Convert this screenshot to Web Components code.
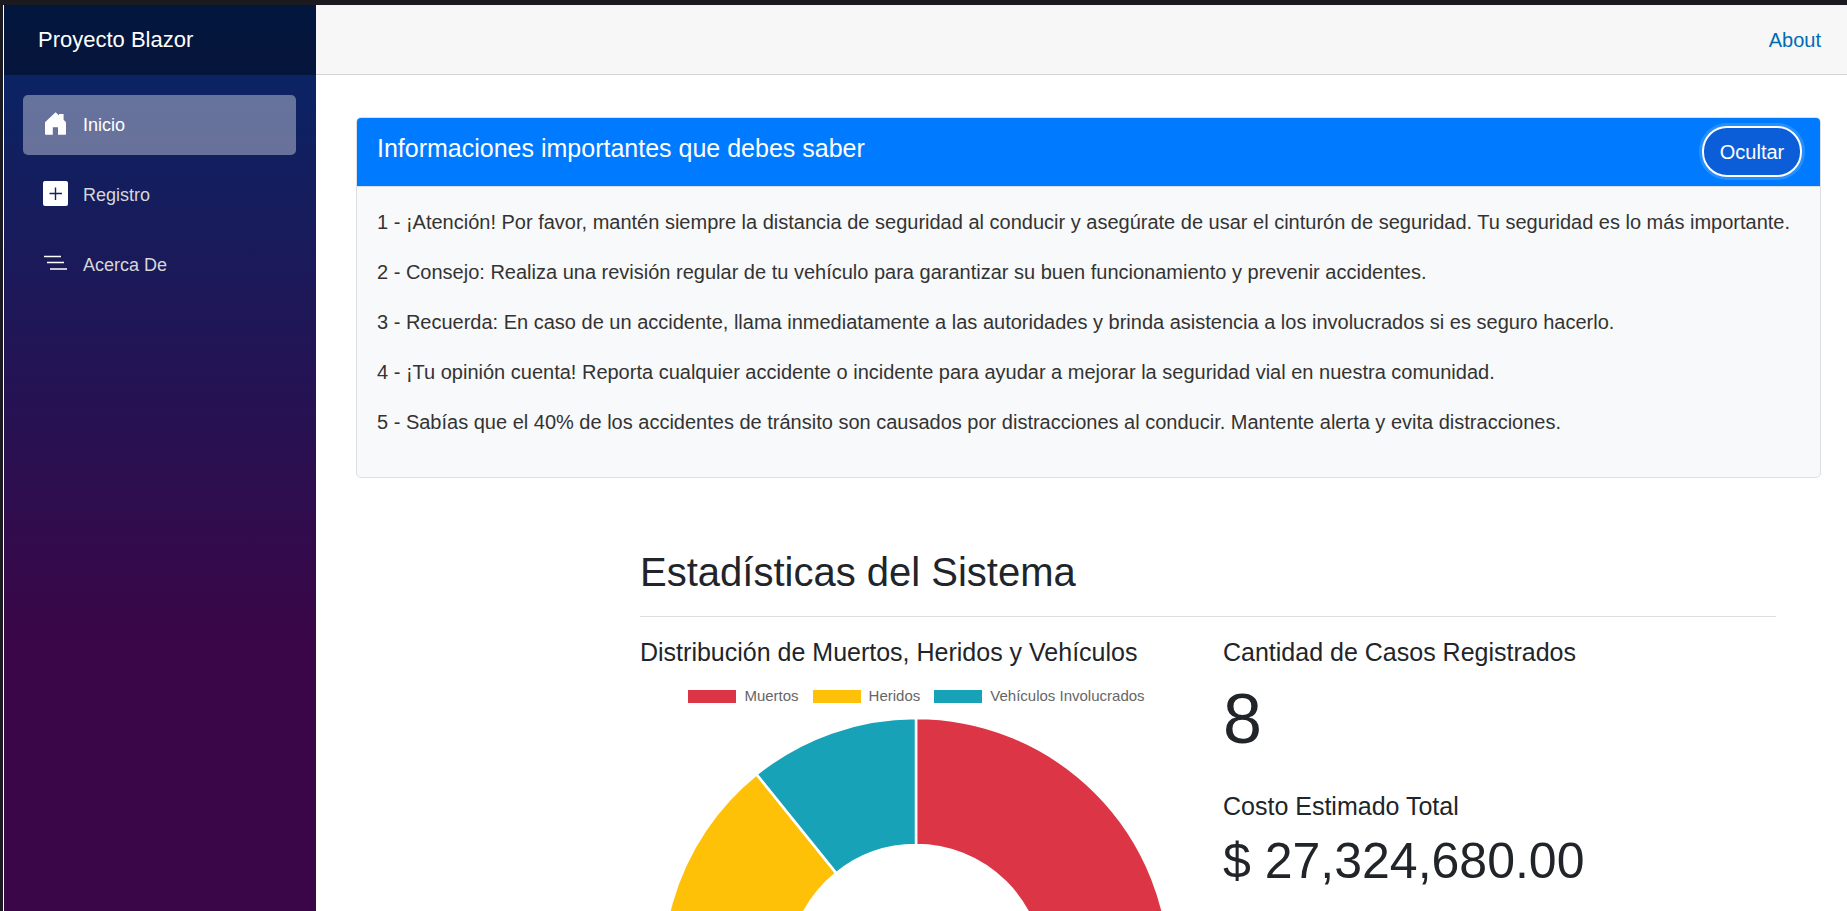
<!DOCTYPE html>
<html lang="es">
<head>
<meta charset="utf-8">
<meta name="viewport" content="width=device-width, initial-scale=1">
<title>Proyecto Blazor</title>
<style>
  html, body { height: 100%; }
  body { margin: 0; font: 20px/30px "Liberation Sans", Arial, sans-serif; color: #212529; background: #fff; }
</style>
</head>
<body>
<app-shell>
  <nav-menu slot="sidebar" brand="Proyecto Blazor">
    <nav-item icon="home" active>Inicio</nav-item>
    <nav-item icon="plus">Registro</nav-item>
    <nav-item icon="list">Acerca De</nav-item>
  </nav-menu>
  <top-row></top-row>
  <info-card heading="Informaciones importantes que debes saber">
    <info-line>1 - ¡Atención! Por favor, mantén siempre la distancia de seguridad al conducir y asegúrate de usar el cinturón de seguridad. Tu seguridad es lo más importante.</info-line>
    <info-line>2 - Consejo: Realiza una revisión regular de tu vehículo para garantizar su buen funcionamiento y prevenir accidentes.</info-line>
    <info-line>3 - Recuerda: En caso de un accidente, llama inmediatamente a las autoridades y brinda asistencia a los involucrados si es seguro hacerlo.</info-line>
    <info-line>4 - ¡Tu opinión cuenta! Reporta cualquier accidente o incidente para ayudar a mejorar la seguridad vial en nuestra comunidad.</info-line>
    <info-line>5 - Sabías que el 40% de los accidentes de tránsito son causados por distracciones al conducir. Mantente alerta y evita distracciones.</info-line>
  </info-card>
  <stats-panel heading="Estadísticas del Sistema">
    <donut-chart slot="chart" heading="Distribución de Muertos, Heridos y Vehículos"></donut-chart>
    <stat-value heading="Cantidad de Casos Registrados" size="large">8</stat-value>
    <stat-value heading="Costo Estimado Total">$ 27,324,680.00</stat-value>
  </stats-panel>
</app-shell>

<script>
class Base extends HTMLElement {
  connectedCallback() {
    if (this.shadowRoot) return;
    this.attachShadow({ mode: 'open' }).innerHTML = this.render();
  }
}
const define = (name, render) => customElements.define(name, class extends Base {
  render() { return render(this); }
});

define('app-shell', () => `
  <style>
    :host { display: flex; height: 100vh; box-sizing: border-box; border-top: 5px solid #1b1a20; border-left: 3px solid #1b1a20; padding-left: 1px; }
    aside { flex: 0 0 312px; background: linear-gradient(180deg, rgb(5, 39, 103) 0%, #3a0647 70%); }
    main { flex: 1; min-width: 0; overflow-y: auto; scrollbar-width: none; }
  </style>
  <aside><slot name="sidebar"></slot></aside>
  <main><slot></slot></main>`);

define('nav-menu', el => `
  <style>
    :host { display: block; }
    header { display: flex; align-items: center; height: 70px; padding: 0 34px; background: rgba(0, 0, 0, .4); }
    header a { color: #fff; font-size: 22px; text-decoration: none; }
    nav { display: flex; flex-direction: column; gap: 10px; padding: 20px 20px 0 19px; }
  </style>
  <header><a href="#">${el.getAttribute('brand')}</a></header>
  <nav><slot></slot></nav>`);

const icons = {
  home: '<path fill="#fff" d="M12.600 1.300 16 4.600V3H20.600V8.800L23 11.200V23Q23 23.700 22.300 23.700H15V16.300H9.800V23.700H2.700Q2 23.700 2 23V11.200Z"/>',
  plus: '<rect width="25" height="25" rx="2" fill="#fff"/><path d="M12.500 6.500v12.500M6.500 12.500h12.500" stroke="#14205f" stroke-width="1.400"/>',
  list: '<path d="M1 5.500h17M4 11.500h17" stroke="#fff" stroke-width="1.400"/><path d="M7 18h17" stroke="#fff" stroke-opacity=".75" stroke-width="2"/>'
};
define('nav-item', el => `
  <style>
    :host { display: block; }
    a { display: flex; align-items: center; gap: 15px; height: 60px; padding: 0 20px; border-radius: 5px; color: #d7d7d7; font-size: 18px; text-decoration: none; }
    :host([active]) a { color: #fff; background: rgba(255, 255, 255, .37); }
    svg { width: 25px; height: 25px; margin-bottom: 3px; }
  </style>
  <a href="#"><svg viewBox="0 0 25 25" aria-hidden="true">${icons[el.getAttribute('icon')]}</svg><span><slot></slot></span></a>`);

define('top-row', () => `
  <style>
    :host { display: flex; align-items: center; justify-content: flex-end; box-sizing: border-box; height: 70px; padding: 0 26px; background: #f7f7f7; border-bottom: 1px solid #d6d5d5; }
    a { color: #006bb7; text-decoration: none; }
  </style>
  <a href="#">About</a>`);

define('info-card', el => `
  <style>
    :host { display: block; margin: 42px 26px 0 40px; border: 1px solid #dedfe0; border-radius: 5px; background: #f8f9fa; overflow: hidden; }
    header { display: flex; align-items: flex-start; justify-content: space-between; padding: 8px 18px 9px 20px; color: #fff; background: #007bff; border-bottom: 1px solid #d9dee4; }
    h5 { margin: 0; font-weight: 400; font-size: 25px; line-height: 44px; }
    button { width: 100px; height: 51px; padding: 0; color: #fff; font: inherit; background: #0b5ed7; border: 2px solid #fff; border-radius: 25px; box-shadow: 0 0 0 3px #268fff; }
    section { padding: 20px; color: #333; }
  </style>
  <header><h5>${el.getAttribute('heading')}</h5><button type="button">Ocultar</button></header>
  <section><slot></slot></section>`);

define('info-line', () => `
  <style>:host { display: block; margin-bottom: 20px; }</style>
  <slot></slot>`);

define('stats-panel', el => `
  <style>
    :host { display: block; margin: 70px 71px 0 324px; }
    h2 { margin: 0; padding-bottom: 20px; font-weight: 400; font-size: 40px; line-height: 48px; border-bottom: 1px solid #dedfe0; }
    .row { display: grid; grid-template-columns: 1fr 1fr; gap: 30px; padding-top: 20px; }
  </style>
  <h2>${el.getAttribute('heading')}</h2>
  <div class="row"><slot name="chart"></slot><div><slot></slot></div></div>`);

define('stat-value', el => `
  <style>
    :host { display: block; margin-bottom: 30px; }
    h5 { margin: 0 0 10px; font-weight: 400; font-size: 25px; line-height: 30px; }
    p { margin: 0; font-size: 50px; line-height: 60px; }
    :host([size="large"]) p { font-size: 70px; line-height: 84px; }
  </style>
  <h5>${el.getAttribute('heading')}</h5>
  <p><slot></slot></p>`);

const series = [
  { label: 'Muertos', color: '#dc3545', share: 0.5 },
  { label: 'Heridos', color: '#ffc107', share: 0.392 },
  { label: 'Vehículos Involucrados', color: '#17a2b8', share: 0.108 }
];
const OUTER = 254;
const INNER = 127;
const slicePath = (from, to) => {
  const point = (radius, turn) => `${radius * Math.sin(turn * 2 * Math.PI)} ${-radius * Math.cos(turn * 2 * Math.PI)}`;
  const large = to - from > 0.5 ? 1 : 0;
  return `M${point(OUTER, from)}A${OUTER} ${OUTER} 0 ${large} 1 ${point(OUTER, to)}L${point(INNER, to)}A${INNER} ${INNER} 0 ${large} 0 ${point(INNER, from)}Z`;
};
define('donut-chart', el => {
  let turn = 0;
  const slices = series.map(s => `<path fill="${s.color}" d="${slicePath(turn, turn += s.share)}"/>`).join('');
  const legend = series.map(s => `<li style="--c:${s.color}">${s.label}</li>`).join('');
  return `
  <style>
    :host { display: block; }
    h5 { margin: 0; font-weight: 400; font-size: 25px; line-height: 30px; }
    ul { display: flex; justify-content: center; gap: 14px; margin: 19px 0 11px; padding: 0; list-style: none; color: #666; font-size: 15px; line-height: 20px; }
    li { display: flex; align-items: center; gap: 8px; white-space: nowrap; }
    li::before { content: ""; width: 48px; height: 13px; background: var(--c); }
    svg { display: block; width: 100%; height: auto; }
  </style>
  <h5>${el.getAttribute('heading')}</h5>
  <ul>${legend}</ul>
  <svg viewBox="-276 -255 553 510" role="img" aria-label="${el.getAttribute('heading')}" stroke="#fff" stroke-width="2.500">${slices}</svg>`;
});
</script>
</body>
</html>
